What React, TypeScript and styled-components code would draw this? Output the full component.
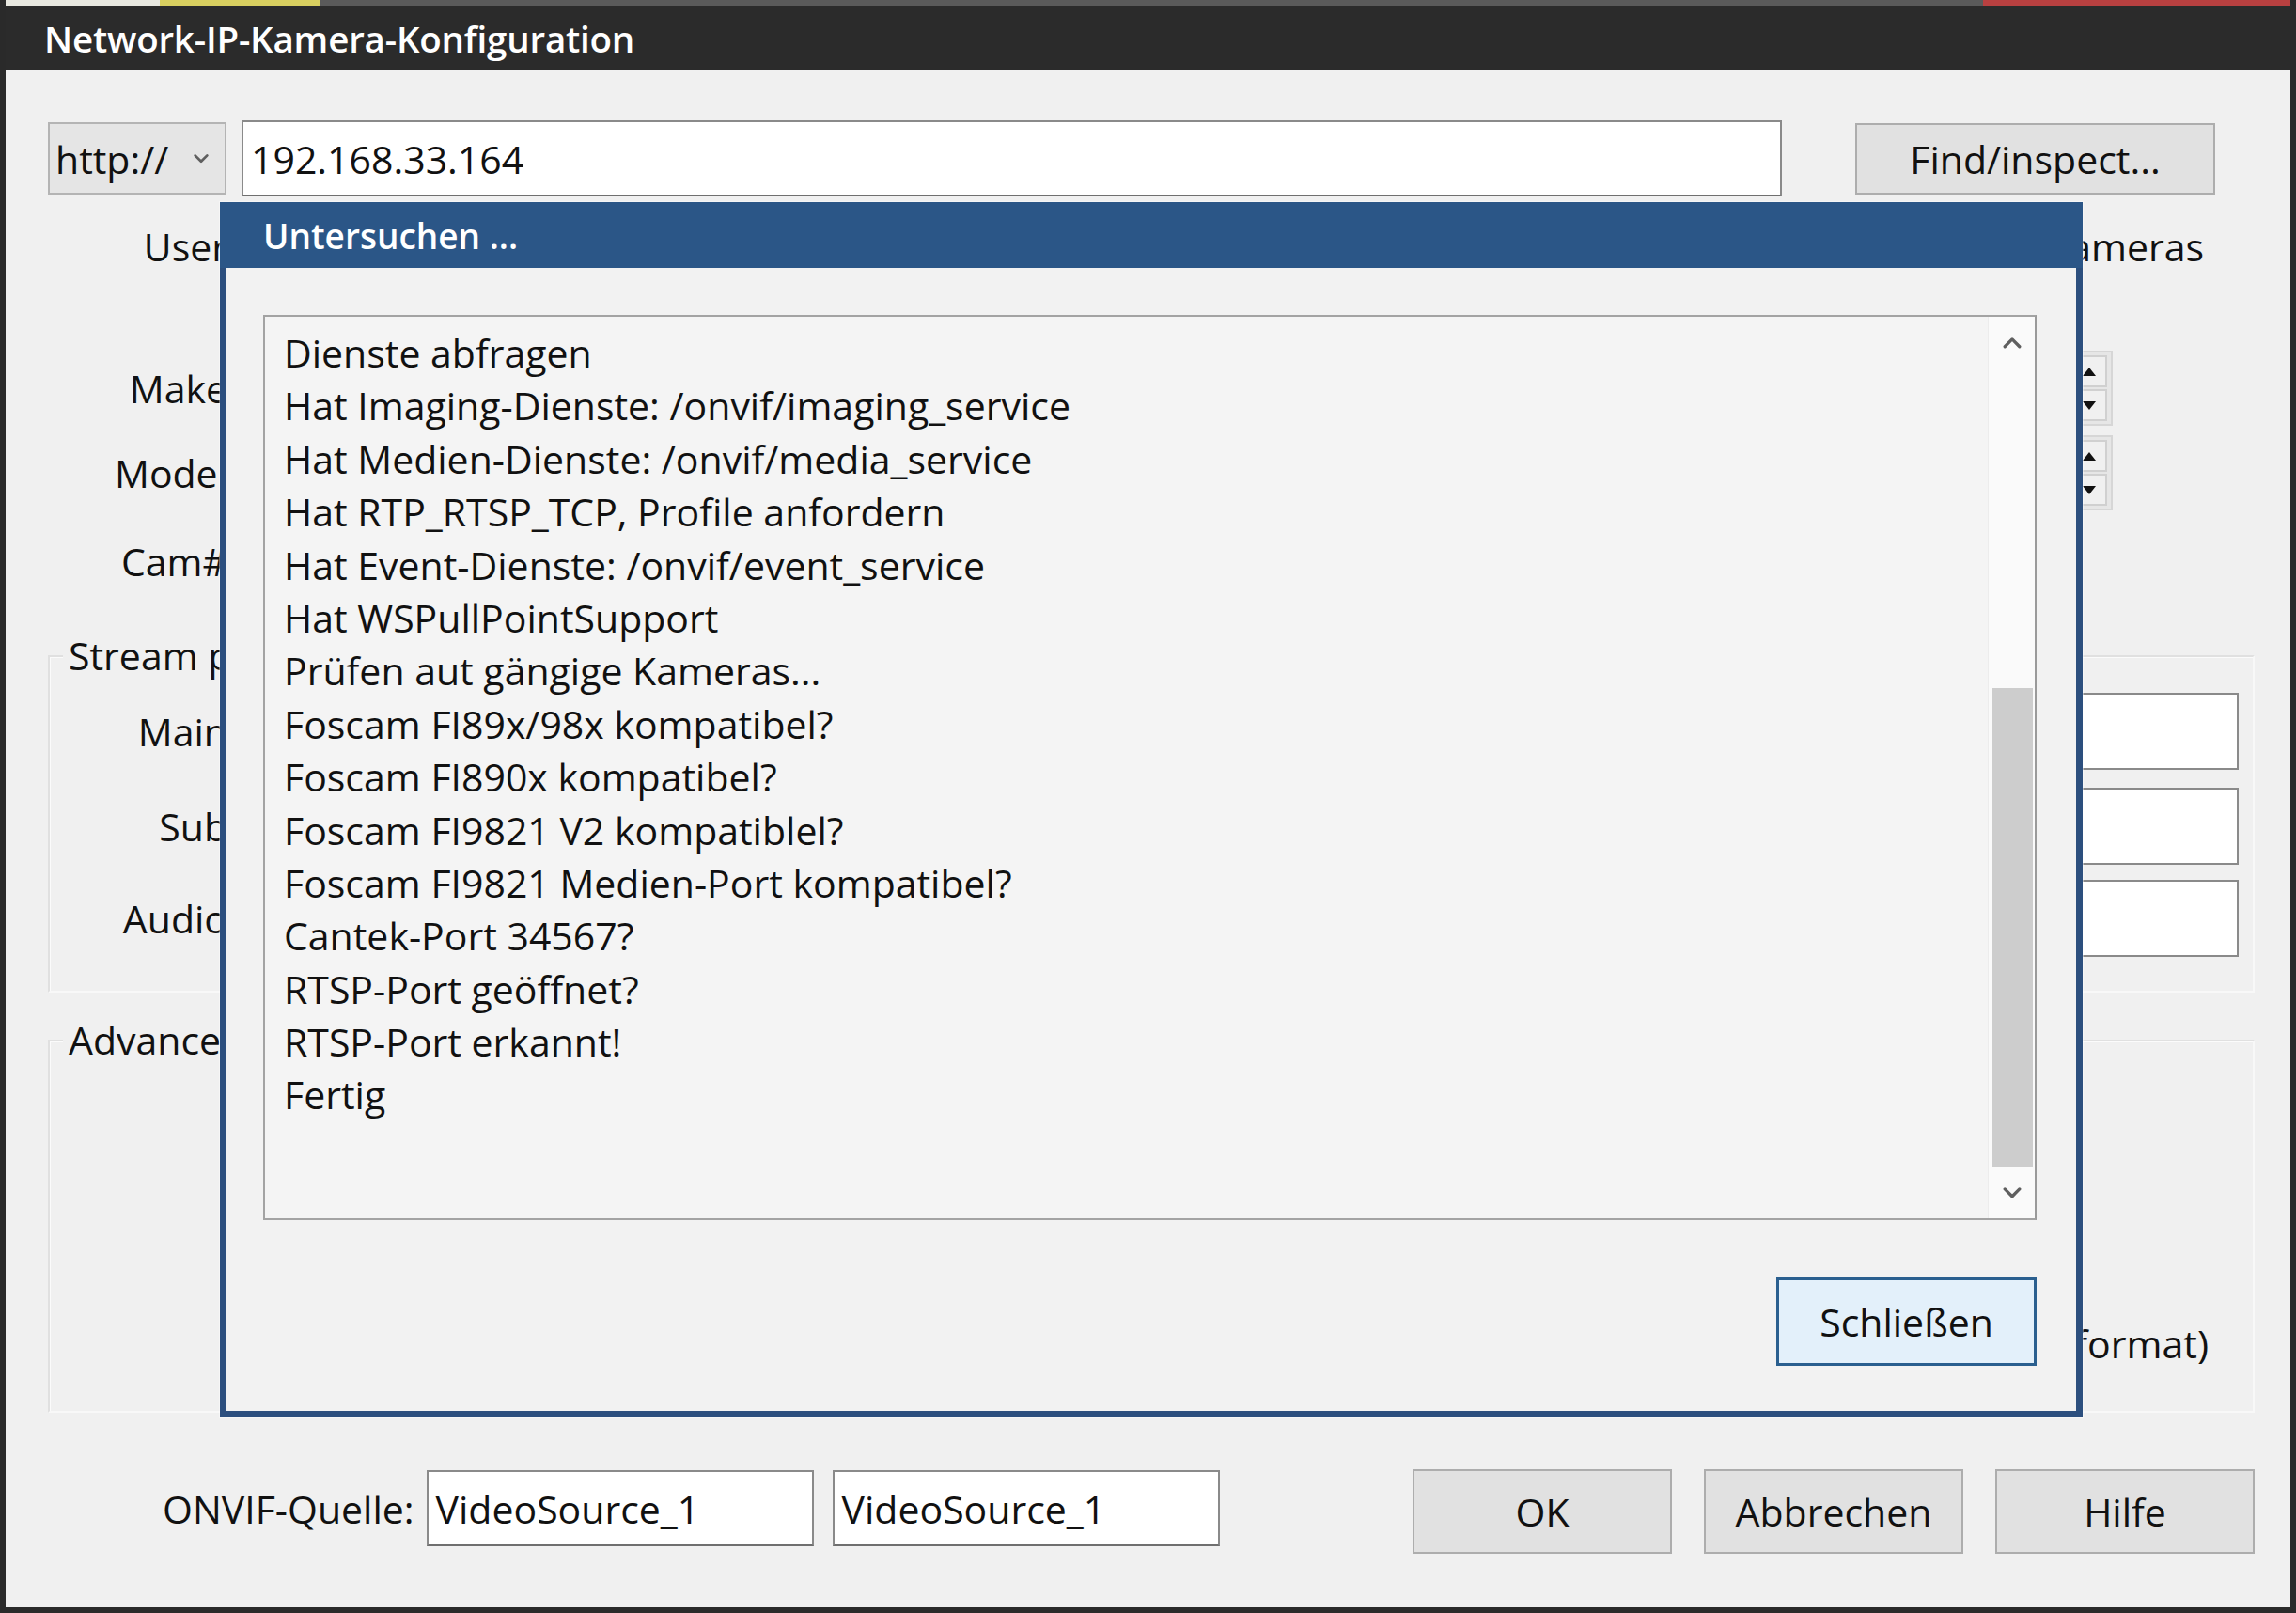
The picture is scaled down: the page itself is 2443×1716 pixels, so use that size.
import styled, { createGlobalStyle } from "styled-components";

const GlobalStyle = createGlobalStyle`
  html, body {
    margin: 0;
    padding: 0;
    background: #2a2a2a;
  }
  * {
    box-sizing: border-box;
  }
`;

const FONT = `"Open Sans", "Noto Sans", "Liberation Sans", sans-serif`;

const logLines = [
  "Dienste abfragen",
  "Hat Imaging-Dienste: /onvif/imaging_service",
  "Hat Medien-Dienste: /onvif/media_service",
  "Hat RTP_RTSP_TCP, Profile anfordern",
  "Hat Event-Dienste: /onvif/event_service",
  "Hat WSPullPointSupport",
  "Prüfen aut gängige Kameras...",
  "Foscam FI89x/98x kompatibel?",
  "Foscam FI890x kompatibel?",
  "Foscam FI9821 V2 kompatiblel?",
  "Foscam FI9821 Medien-Port kompatibel?",
  "Cantek-Port 34567?",
  "RTSP-Port geöffnet?",
  "RTSP-Port erkannt!",
  "Fertig",
];

const Chevron = ({ up, size = 22 }: { up?: boolean; size?: number }) => (
  <svg width={size} height={size * 0.62} viewBox="0 0 22 14" fill="none">
    <polyline
      points={up ? "3,11 11,3 19,11" : "3,3 11,11 19,3"}
      stroke="#5f5f5f"
      strokeWidth="3.4"
      strokeLinecap="round"
      strokeLinejoin="round"
    />
  </svg>
);

const Triangle = ({ up }: { up?: boolean }) => (
  <svg width="14" height="9" viewBox="0 0 14 9">
    <polygon points={up ? "7,0 14,9 0,9" : "0,0 14,0 7,9"} fill="#111" />
  </svg>
);

export default function App() {
  return (
    <>
      <GlobalStyle />
      <Window>
        <TopStripe />
        <TitleBar>Network-IP-Kamera-Konfiguration</TitleBar>
        <Body>
          <AddressRow>
            <SchemeSelect>
              <span>http://</span>
              <Chevron size={18} />
            </SchemeSelect>
            <TextField $grow>192.168.33.164</TextField>
            <PushButton $width={383} $height={76}>Find/inspect...</PushButton>
          </AddressRow>

          <FieldRow $top={13}>
            <FieldLabel>User</FieldLabel>
            <RowFill />
            <SideText>Cameras</SideText>
          </FieldRow>
          <FieldRow $top={71}>
            <FieldLabel>Make</FieldLabel>
            <RowFill />
            <Spinner>
              <SpinButton><Triangle up /></SpinButton>
              <SpinButton><Triangle /></SpinButton>
            </Spinner>
          </FieldRow>
          <FieldRow $top={10}>
            <FieldLabel>Model</FieldLabel>
            <RowFill />
            <Spinner>
              <SpinButton><Triangle up /></SpinButton>
              <SpinButton><Triangle /></SpinButton>
            </Spinner>
          </FieldRow>
          <FieldRow $top={14}>
            <FieldLabel>Cam#</FieldLabel>
            <RowFill />
          </FieldRow>

          <GroupBox $top={60} $height={359}>
            <GroupTitle>Stream p</GroupTitle>
            <GroupRow $top={38}>
              <GroupLabel>Main</GroupLabel>
              <RowFill />
              <WhiteBox />
            </GroupRow>
            <GroupRow $top={19}>
              <GroupLabel>Sub</GroupLabel>
              <RowFill />
              <WhiteBox />
            </GroupRow>
            <GroupRow $top={16}>
              <GroupLabel>Audio</GroupLabel>
              <RowFill />
              <WhiteBox />
            </GroupRow>
          </GroupBox>

          <GroupBox $top={50} $height={397}>
            <GroupTitle>Advanced</GroupTitle>
            <AdvancedNote>format)</AdvancedNote>
          </GroupBox>

          <BottomRow>
            <BottomLabel>ONVIF-Quelle:</BottomLabel>
            <TextField $width={412}>VideoSource_1</TextField>
            <TextField $width={412}>VideoSource_1</TextField>
            <RowFill />
            <ButtonGroup>
              <PushButton $width={276} $height={90}>OK</PushButton>
              <PushButton $width={276} $height={90}>Abbrechen</PushButton>
              <PushButton $width={276} $height={90}>Hilfe</PushButton>
            </ButtonGroup>
          </BottomRow>
        </Body>

        <Dialog>
          <DialogTitle>Untersuchen ...</DialogTitle>
          <DialogBody>
            <LogList>
              <LogLines>
                {logLines.map((line) => (
                  <LogLine key={line}>{line}</LogLine>
                ))}
              </LogLines>
              <ScrollBar>
                <ScrollArrow><Chevron up /></ScrollArrow>
                <ScrollTrack>
                  <ScrollThumb style={{ marginTop: "340px", height: "509px" }} />
                </ScrollTrack>
                <ScrollArrow><Chevron /></ScrollArrow>
              </ScrollBar>
            </LogList>
            <DialogFooter>
              <DefaultButton>Schließen</DefaultButton>
            </DialogFooter>
          </DialogBody>
        </Dialog>
      </Window>
    </>
  );
}

const Window = styled.div`
  position: relative;
  width: 2443px;
  height: 1716px;
  display: flex;
  flex-direction: column;
  background: #f0f0f0;
  border-left: 6px solid #2a2a2a;
  border-right: 6px solid #2a2a2a;
  border-bottom: 6px solid #2a2a2a;
  font-family: ${FONT};
  color: #111;
  overflow: hidden;
`;

const TopStripe = styled.div`
  height: 6px;
  margin: 0 -6px;
  background: linear-gradient(
    to right,
    #e8e8e0 0,
    #e8e8e0 170px,
    #d8cf60 170px,
    #d8cf60 340px,
    #5a5a5a 340px,
    #5a5a5a 2110px,
    #b84040 2110px,
    #b84040 100%
  );
`;

const TitleBar = styled.div`
  height: 69px;
  margin: 0 -6px;
  padding-left: 47px;
  display: flex;
  align-items: center;
  background: #2b2b2b;
  color: #fff;
  font-size: 38.5px;
  font-weight: 600;
  letter-spacing: -0.2px;
`;

const Body = styled.div`
  flex: 1;
  display: flex;
  flex-direction: column;
  padding: 53px 38px 0 45px;
  font-size: 41px;
`;

const AddressRow = styled.div`
  height: 81px;
  display: flex;
  align-items: center;
  gap: 16px;
  margin-right: 42px;
`;

const SchemeSelect = styled.div`
  width: 190px;
  height: 77px;
  display: flex;
  align-items: center;
  justify-content: space-between;
  padding: 0 16px 0 6px;
  background: #e5e5e5;
  border: 2px solid #b4b4b4;
`;

const TextField = styled.div<{ $grow?: boolean; $width?: number }>`
  ${({ $grow }) => ($grow ? "flex: 1;" : "")}
  ${({ $width }) => ($width ? `width: ${$width}px;` : "")}
  height: 81px;
  display: flex;
  align-items: center;
  padding-left: 8px;
  background: #fff;
  border: 2px solid #8a8a8a;
  border-bottom-color: #6f6f6f;
  margin-right: ${({ $grow }) => ($grow ? "62px" : "0")};
`;

const PushButton = styled.div<{ $width: number; $height: number }>`
  width: ${({ $width }) => $width}px;
  height: ${({ $height }) => $height}px;
  display: flex;
  align-items: center;
  justify-content: center;
  background: #e1e1e1;
  border: 2px solid #adadad;
`;

const FieldRow = styled.div<{ $top: number }>`
  height: 80px;
  margin-top: ${({ $top }) => $top}px;
  display: flex;
  align-items: center;
`;

const FieldLabel = styled.div`
  width: 191px;
  text-align: right;
`;

const RowFill = styled.div`
  flex: 1;
`;

const SideText = styled.div`
  margin-right: 54px;
`;

const Spinner = styled.div`
  width: 48px;
  height: 80px;
  margin-right: 151px;
  display: flex;
  flex-direction: column;
  padding: 3px 4px 3px 2px;
  background: #e6e6e6;
  border: 2px solid #d6d6d6;
`;

const SpinButton = styled.div`
  flex: 1;
  display: flex;
  align-items: center;
  justify-content: center;
  background: #f0f0f0;
  border: 2px solid #d0d0d0;
  & + & {
    margin-top: 2px;
  }
`;

const GroupBox = styled.div<{ $top: number; $height: number }>`
  position: relative;
  margin-top: ${({ $top }) => $top}px;
  height: ${({ $height }) => $height}px;
  display: flex;
  flex-direction: column;
  border: 2px solid #e0e0e0;
  border-right-color: #f8f8f8;
  border-bottom-color: #f8f8f8;
  box-shadow: inset 1px 1px 0 #fbfbfb;
`;

const GroupTitle = styled.div`
  position: absolute;
  top: -30px;
  left: 14px;
  padding: 0 6px;
  background: #f0f0f0;
  line-height: 56px;
`;

const GroupRow = styled.div<{ $top: number }>`
  height: 82px;
  margin-top: ${({ $top }) => $top}px;
  display: flex;
  align-items: center;
`;

const GroupLabel = styled.div`
  width: 189px;
  text-align: right;
`;

const WhiteBox = styled.div`
  width: 300px;
  height: 82px;
  margin-right: 15px;
  background: #fff;
  border: 2px solid #8a8a8a;
`;

const AdvancedNote = styled.div`
  margin-top: auto;
  margin-bottom: 44px;
  margin-right: 47px;
  align-self: flex-end;
`;

const BottomRow = styled.div`
  height: 93px;
  margin-top: 55px;
  display: flex;
  align-items: center;
  gap: 20px;
`;

const BottomLabel = styled.div`
  margin-left: 122px;
  margin-right: -7px;
`;

const ButtonGroup = styled.div`
  display: flex;
  gap: 34px;
  align-self: flex-end;
  margin-bottom: -2px;
`;

const Dialog = styled.div`
  position: absolute;
  left: 228px;
  top: 215px;
  width: 1982px;
  height: 1293px;
  display: flex;
  flex-direction: column;
  background: #f2f2f2;
  border: 7px solid #2c4f7e;
  border-top: 0;
  box-shadow: 0 0 0 1px rgba(255, 255, 255, 0.4);
`;

const DialogTitle = styled.div`
  height: 70px;
  margin: 0 -7px;
  padding-left: 46px;
  display: flex;
  align-items: center;
  background: #2b5687;
  color: #fff;
  font-size: 37px;
  font-weight: 600;
`;

const DialogBody = styled.div`
  flex: 1;
  display: flex;
  flex-direction: column;
  padding: 50px 42px 48px 39px;
  font-size: 41px;
`;

const LogList = styled.div`
  height: 963px;
  display: flex;
  background: #f4f4f4;
  border: 2px solid #a3a3a3;
  border-right-color: #9a9a9a;
`;

const LogLines = styled.div`
  flex: 1;
  padding: 10px 0 0 20px;
`;

const LogLine = styled.div`
  height: 56.4px;
  line-height: 56.4px;
  white-space: nowrap;
`;

const ScrollBar = styled.div`
  width: 50px;
  display: flex;
  flex-direction: column;
  background: #fafafa;
  border-left: 1px solid #ececec;
`;

const ScrollArrow = styled.div`
  height: 60px;
  display: flex;
  align-items: center;
  justify-content: center;
`;

const ScrollTrack = styled.div`
  flex: 1;
  display: flex;
  flex-direction: column;
  padding: 0 2px 0 4px;
`;

const ScrollThumb = styled.div`
  background: #cdcdcd;
`;

const DialogFooter = styled.div`
  flex: 1;
  display: flex;
  justify-content: flex-end;
  align-items: flex-end;
`;

const DefaultButton = styled.div`
  width: 277px;
  height: 94px;
  display: flex;
  align-items: center;
  justify-content: center;
  background: #e3f0fa;
  border: 3px solid #2a5f8f;
`;
